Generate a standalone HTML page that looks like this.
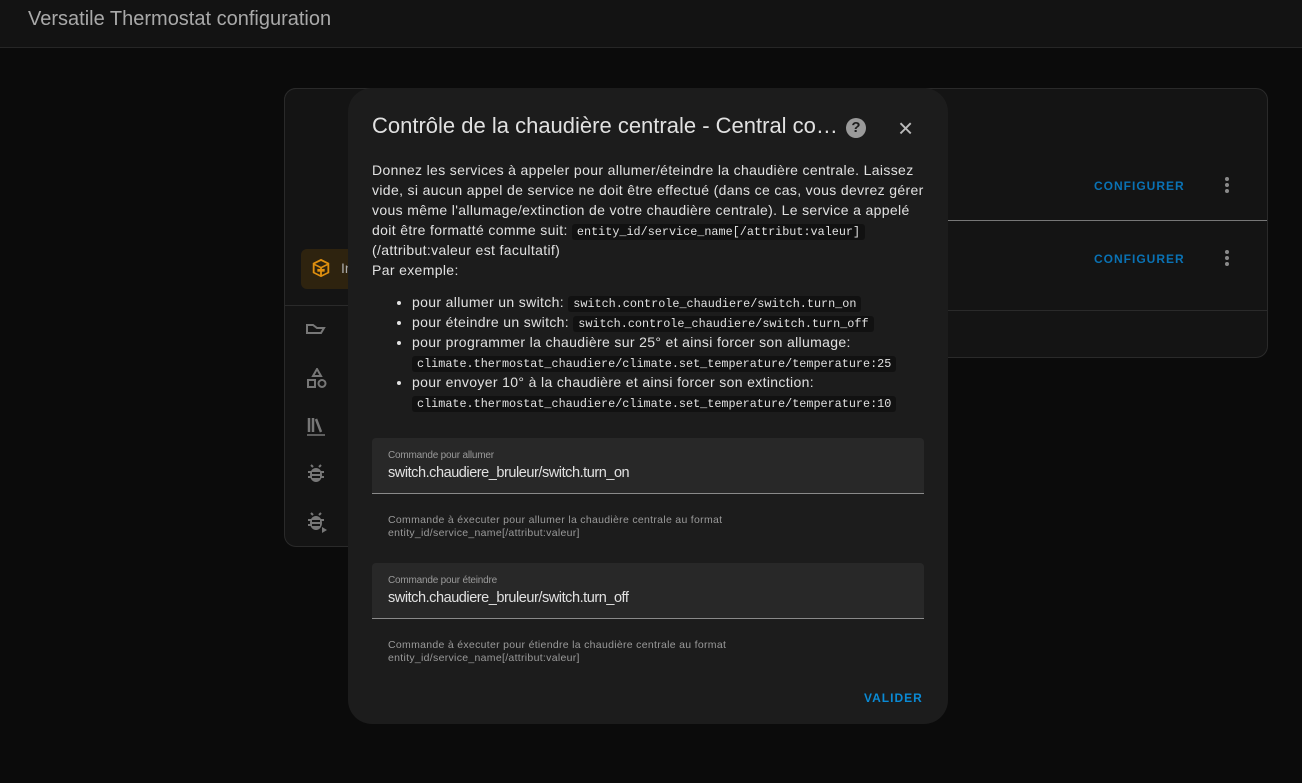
<!DOCTYPE html>
<html><head><meta charset="utf-8"><style>
*{box-sizing:border-box;margin:0;padding:0}
body{width:1302px;height:783px;background:#0b0b0b;font-family:"Liberation Sans",Arial,sans-serif;position:relative;overflow:hidden;color:#e1e1e1}
.hdr{position:absolute;left:0;top:0;width:1302px;height:48px;background:#131313;border-bottom:1px solid #262626}
.hdr span{position:absolute;left:28px;top:8px;font-size:20px;color:#a9a9a9}
.card{position:absolute;left:284px;top:88px;width:984px;height:270px;background:#141414;border:1px solid #2a2a2a;border-radius:12px}
.side{position:absolute;left:284px;top:88px;width:80px;height:459px;background:#141414;border:1px solid #2a2a2a;border-right:none;border-radius:12px 0 0 12px}
.cfg{position:absolute;font-size:12px;font-weight:bold;letter-spacing:1px;color:#0a72b4}
.dots{position:absolute;width:4px}
.dots i{display:block;width:4px;height:4px;border-radius:2px;background:#8a8a8a;margin-bottom:2px}
.dlg{position:absolute;left:348px;top:88px;width:600px;height:636px;background:#1c1c1c;border-radius:24px}
.title{position:absolute;left:24px;top:25px;font-size:22px;color:#e1e1e1}
.body{position:absolute;left:24px;top:72px;width:570px;font-size:14px;line-height:20px;color:#e1e1e1;white-space:nowrap;letter-spacing:0.35px}
code{font-family:"Liberation Mono",monospace;font-size:11.8px;background:#111;padding:1px 5px;border-radius:3px;letter-spacing:0;line-height:16px}
ul{margin:12px 0 0 40px}
li{line-height:20px}
.field{position:absolute;left:24px;width:552px;height:56px;background:#282828;border-radius:4px 4px 0 0;border-bottom:1px solid #8a8a8a}
.field .l{position:absolute;left:16px;top:12px;font-size:10px;color:#9a9a9a;letter-spacing:-0.2px}
.field .v{position:absolute;left:16px;top:27px;font-size:14.5px;color:#e1e1e1;letter-spacing:-0.45px}
.help{position:absolute;left:40px;font-size:10.5px;line-height:13px;color:#9a9a9a;letter-spacing:0.3px}
</style></head><body>
<div class="hdr"><span>Versatile Thermostat configuration</span></div>
<div class="card"></div>
<div class="side"></div>
<div style="position:absolute;left:948px;top:220px;width:319px;height:1px;background:#777"></div>
<div style="position:absolute;left:948px;top:310px;width:319px;height:1px;background:#2a2a2a"></div>
<div style="position:absolute;left:285px;top:305px;width:70px;height:1px;background:#2a2a2a"></div>
<div class="cfg" style="left:1094px;top:179px">CONFIGURER</div>
<div class="cfg" style="left:1094px;top:252px">CONFIGURER</div>
<div class="dots" style="left:1225px;top:177px"><i></i><i></i><i></i></div>
<div class="dots" style="left:1225px;top:250px"><i></i><i></i><i></i></div>
<div style="position:absolute;left:301px;top:249px;width:60px;height:40px;background:#2e230f;border-radius:6px"></div>
<svg style="position:absolute;left:310px;top:257px" width="22" height="22" viewBox="0 0 24 24"><path fill="#e0900f" d="M12 2 3 6.5v11L12 22l9-4.5v-11L12 2zm0 2.3 6.5 3.2L12 10.7 5.5 7.5 12 4.3zM5 9.2l6 3v7.3l-6-3V9.2zm8 10.3v-7.3l6-3v7.3l-6 3z"/><rect x="8" y="13" width="8" height="3" fill="#e0900f"/></svg>
<span style="position:absolute;left:341px;top:260px;font-size:14px;color:#aaa">In</span>
<svg style="position:absolute;left:305px;top:322px" width="22" height="18" viewBox="0 0 22 18"><path d="M2 3h6l4 3h7l-3 5H2z" fill="none" stroke="#777" stroke-width="2"/></svg>
<svg style="position:absolute;left:306px;top:368px" width="22" height="22" viewBox="0 0 22 22"><path d="M11 1 15 8H7z" fill="none" stroke="#777" stroke-width="2"/><rect x="2" y="12" width="7" height="7" fill="none" stroke="#777" stroke-width="2"/><circle cx="16" cy="15.5" r="3.5" fill="none" stroke="#777" stroke-width="2"/></svg>
<svg style="position:absolute;left:306px;top:416px" width="20" height="20" viewBox="0 0 20 20"><path d="M3 2v14M7 2v14M10 3l5 13" stroke="#777" stroke-width="2.5" fill="none"/><path d="M1 19h18" stroke="#777" stroke-width="1.5"/></svg>
<svg style="position:absolute;left:307px;top:464px" width="18" height="20" viewBox="0 0 18 20"><ellipse cx="9" cy="11" rx="6" ry="7" fill="#777"/><path d="M6 3 4 1M12 3l2-2M1 8h3M14 8h3M1 13h3M14 13h3" stroke="#777" stroke-width="2"/><path d="M5 9h8M5 13h8" stroke="#141414" stroke-width="2"/></svg>
<svg style="position:absolute;left:307px;top:512px" width="22" height="22" viewBox="0 0 22 22"><ellipse cx="9" cy="11" rx="6" ry="7" fill="#777"/><path d="M6 3 4 1M12 3l2-2M1 8h3M14 8h3M1 13h3" stroke="#777" stroke-width="2"/><path d="M5 9h8M5 13h8" stroke="#141414" stroke-width="2"/><path d="M15 15l5 3-5 3z" fill="#777"/></svg>
<div class="dlg">
<div class="title">Contrôle de la chaudière centrale - Central co…</div>
<div style="position:absolute;left:498px;top:30px;width:20px;height:20px;border-radius:10px;background:#9a9a9a;color:#1c1c1c;font-weight:bold;font-size:15px;text-align:center;line-height:20px">?</div>
<div style="position:absolute;left:550px;top:25px;font-size:26px;color:#bbb;line-height:30px">×</div>
<div class="body">Donnez les services à appeler pour allumer/éteindre la chaudière centrale. Laissez<br>vide, si aucun appel de service ne doit être effectué (dans ce cas, vous devrez gérer<br>vous même l'allumage/extinction de votre chaudière centrale). Le service a appelé<br>doit être formatté comme suit: <code>entity_id/service_name[/attribut:valeur]</code><br>(/attribut:valeur est facultatif)<br>Par exemple:
<ul>
<li>pour allumer un switch: <code>switch.controle_chaudiere/switch.turn_on</code></li>
<li>pour éteindre un switch: <code>switch.controle_chaudiere/switch.turn_off</code></li>
<li>pour programmer la chaudière sur 25° et ainsi forcer son allumage:<br><code>climate.thermostat_chaudiere/climate.set_temperature/temperature:25</code></li>
<li>pour envoyer 10° à la chaudière et ainsi forcer son extinction:<br><code>climate.thermostat_chaudiere/climate.set_temperature/temperature:10</code></li>
</ul></div>
<div class="field" style="top:350px"><div class="l">Commande pour allumer</div><div class="v">switch.chaudiere_bruleur/switch.turn_on</div></div>
<div class="help" style="top:426px">Commande à éxecuter pour allumer la chaudière centrale au format<br>entity_id/service_name[/attribut:valeur]</div>
<div class="field" style="top:475px"><div class="l">Commande pour éteindre</div><div class="v">switch.chaudiere_bruleur/switch.turn_off</div></div>
<div class="help" style="top:551px">Commande à éxecuter pour étiendre la chaudière centrale au format<br>entity_id/service_name[/attribut:valeur]</div>
<div style="position:absolute;left:516px;top:603px;font-size:12px;font-weight:bold;letter-spacing:1px;color:#0a8ad4">VALIDER</div>
</div>
</body></html>
